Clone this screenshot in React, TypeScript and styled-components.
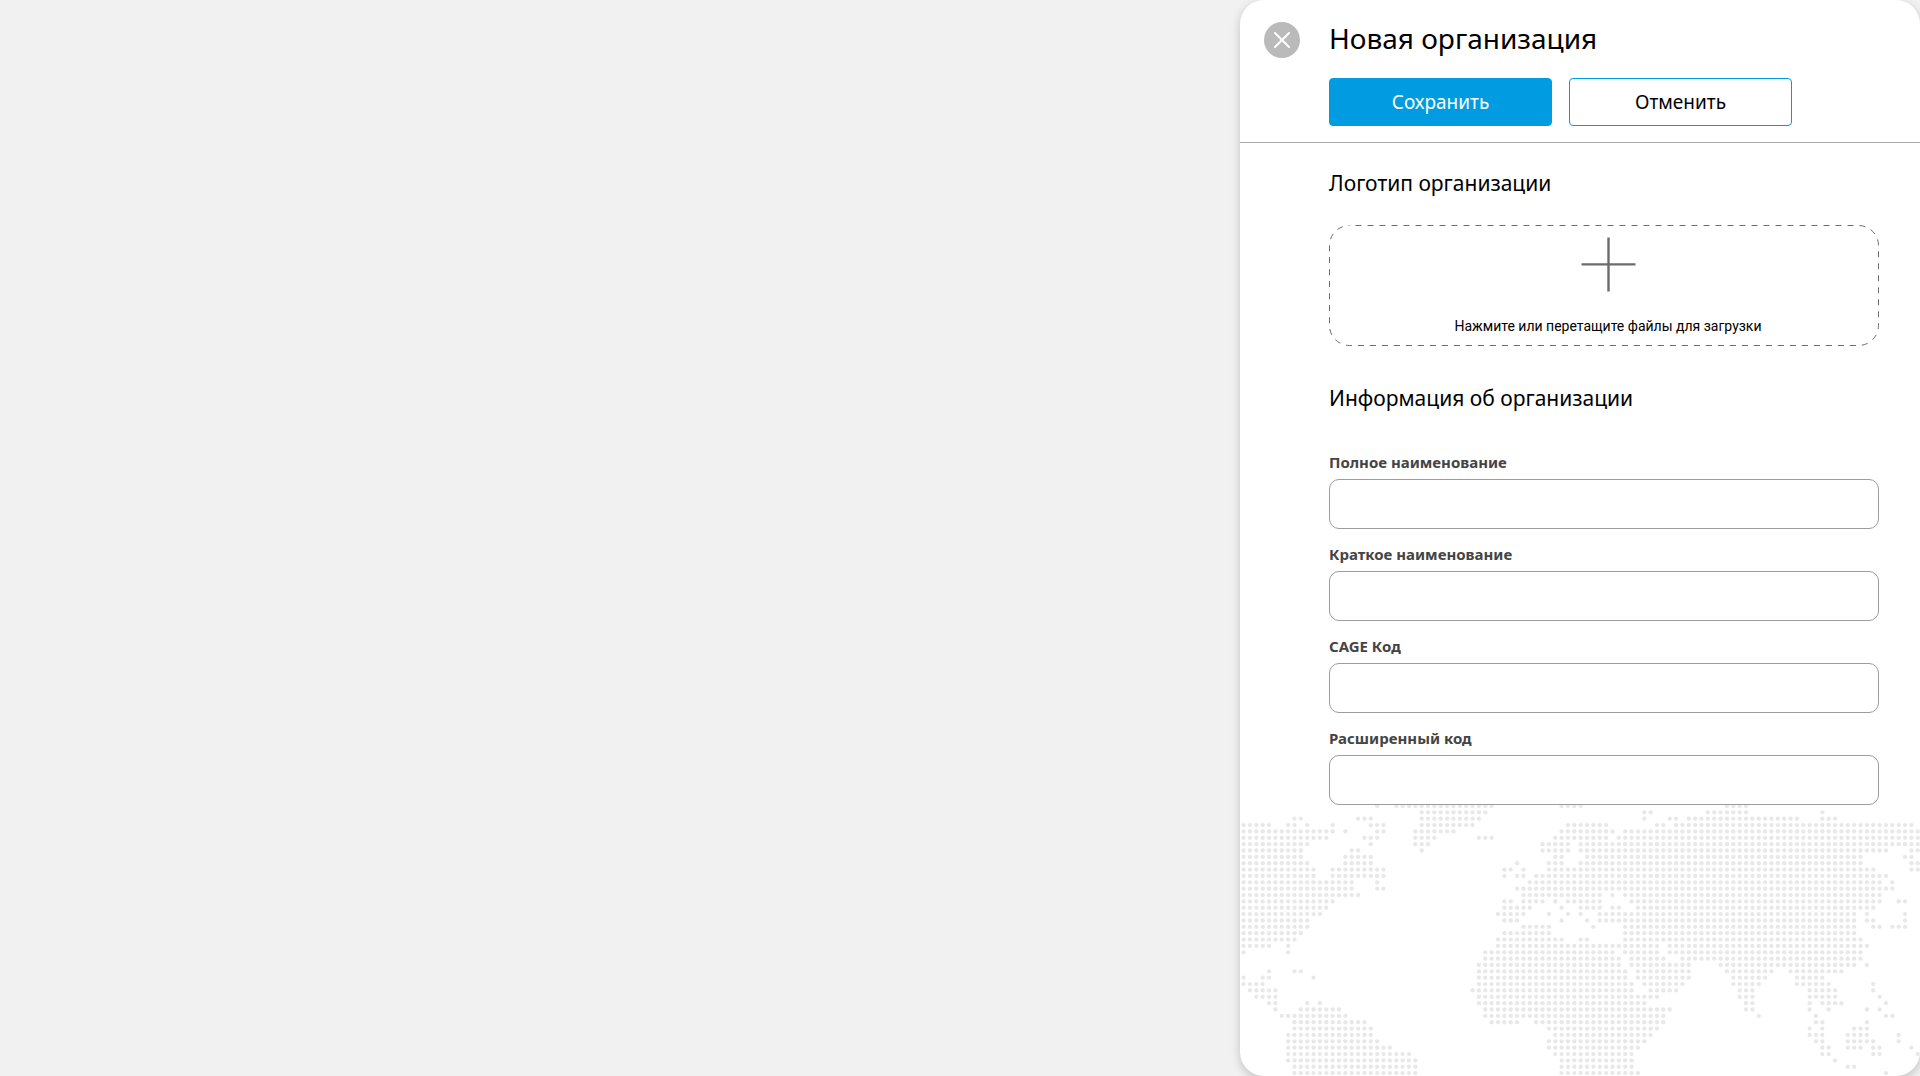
import React from 'react';
import styled, { createGlobalStyle } from 'styled-components';

const GlobalStyle = createGlobalStyle`
  *, *::before, *::after { box-sizing: border-box; }
  body {
    margin: 0;
    background: #f1f1f1;
    color: #000;
    font-family: 'Noto Sans', 'Open Sans', sans-serif;
  }
`;

const Page = styled.div`
  display: flex;
  justify-content: flex-end;
  min-height: 100vh;
`;

const Panel = styled.form`
  display: flex;
  flex-direction: column;
  width: 680px;
  max-width: 100%;
  overflow: hidden;
  background: #fff;
  border-radius: 24px;
  box-shadow: 0 3px 10px rgba(0, 0, 0, 0.2);
`;

const Header = styled.header`
  display: grid;
  grid-template-columns: 65px 1fr;
  row-gap: 20px;
  padding: 22px 24px 16px;
  border-bottom: 1px solid #aaa;
`;

const CloseButton = styled.button`
  display: flex;
  align-items: center;
  justify-content: center;
  width: 36px;
  height: 36px;
  padding: 0;
  border: 0;
  border-radius: 50%;
  background: #bababa;
  cursor: pointer;
`;

const Title = styled.h1`
  margin: 0;
  font-size: 28px;
  font-weight: 400;
  line-height: 32px;
`;

const Actions = styled.div`
  display: flex;
  grid-column: 2;
  gap: 17px;
`;

const ActionButton = styled.button<{ $primary?: boolean }>`
  width: 223px;
  height: 48px;
  padding: 0;
  border: 1px solid #009be0;
  border-radius: 4px;
  background: ${(p) => (p.$primary ? '#009be0' : '#fff')};
  color: ${(p) => (p.$primary ? '#fff' : '#000')};
  font-family: inherit;
  font-size: 19px;
  line-height: 28px;
  cursor: pointer;
`;

const Content = styled.main`
  display: flex;
  flex-direction: column;
  gap: 38px;
  padding: 26px 41px 0 89px;
`;

const Section = styled.section<{ $gap: number }>`
  display: flex;
  flex-direction: column;
  gap: ${(p) => p.$gap}px;
`;

const SectionTitle = styled.h2`
  margin: 0;
  font-size: 21px;
  font-weight: 400;
  line-height: 28px;
`;

const DropZone = styled.label`
  position: relative;
  display: flex;
  flex-direction: column;
  align-items: center;
  gap: 25px;
  height: 121px;
  padding: 12px 0 0 8px;
  font-family: Roboto, 'Noto Sans', sans-serif;
  font-size: 14px;
  line-height: 20px;
  cursor: pointer;
`;

const DashedOutline = styled.svg`
  position: absolute;
  top: 0;
  left: 0;
  width: 100%;
  height: 100%;

  rect {
    x: 0.5px;
    y: 0.5px;
    width: calc(100% - 1px);
    height: calc(100% - 1px);
  }
`;

const FileInput = styled.input`
  position: absolute;
  width: 1px;
  height: 1px;
  opacity: 0;
`;

const Fields = styled.div`
  display: flex;
  flex-direction: column;
  gap: 15px;
`;

const Field = styled.div`
  display: flex;
  flex-direction: column;
  gap: 7px;
`;

const FieldLabel = styled.label`
  color: #444;
  font-size: 15px;
  font-weight: 700;
  line-height: 20px;
`;

const TextInput = styled.input`
  width: 100%;
  height: 50px;
  padding: 0 16px;
  border: 1px solid #9c9c9c;
  border-radius: 10px;
  background: #fff;
  font-family: inherit;
  font-size: 19px;
`;

const MapFooter = styled.footer`
  display: flex;
  flex: 1;
  min-height: 271px;
`;

const MapSvg = styled.svg`
  width: 100%;
  height: 271px;
`;

/* Each string is one row of the dotted map: runs of filled columns. */
const MAP_ROWS = [
  '21 24-39 50-53 76-79',
  '28-38 63-64 73-79 91',
  '8-9 18-20 28-37 63 67-68 70-87 91-93',
  '0-4 7-8 10 14 20-22 28-36 51-57 65-66 68-105',
  '0-14 16 21-22 27-33 50-58 60-106',
  '0-13 19-21 27-30 37-39 49-57 59-106',
  '0-10 20 27-29 47-51 53-106',
  '0-9 17-18 28 47-51 53-101 105-106',
  '0-9 16-20 49-50 54-97 104-105',
  '0-10 16-20 43 48-50 53-97 105-106',
  '0-11 14-22 41-42 44 48-99 105-106',
  '0-11 14-22 41 43-44 46-101',
  '0-17 21 45-100 102',
  '0-17 21-22 43-102',
  '0-18 44-56 58 60-100',
  '0-14 41-42 44-47 49 51-56 61-100 103-104',
  '0-13 41-45 50 53-56 58-59 62-99',
  '0-12 40-44 48 51 53 56-96 98 104',
  '0-10 41-43 50 54 56-96 98-99 104',
  '0-10 44-48 55 60-96 99-100 102-104',
  '0-9 41-48 60-96',
  '0-8 40-50 53-54 60-97',
  '0-4 7 40-65 67-98',
  '0 7 38-58 60-65 67-97',
  '38-59 61-66 69-97',
  '37-59 61-70 75-96 98',
  '4 8-9 37-60 62-70 76-83 86-94',
  '0 3-4 11 37-60 62-70 77-82 87-91',
  '0-3 37-61 63-69 77-81 87-92 99',
  '1-5 36-61 64-68 78-80 89-93 99',
  '2-5 37-65 78-80 89-93 100',
  '4-5 10 12 37-63 79-80 89 91-94 101',
  '5 9-15 38-67 79-80 89 92 98 100',
  '6-16 38-66 81 90 101-102',
  '8-19 39-43 46-66 90-91 98',
  '8-20 48-65 89 91 96-98',
  '7-20 49-64 89-91 95-98 103',
  '7-21 48-63 90-91 95-99 103',
  '7-23 48-62 91-92 95-97 99-100 105',
  '7-26 49-61 91-92 99-100 106',
  '7-27 50-61 93',
  '8-27 50-61 95-96',
  '8-27 50-62 101',
];

const PITCH = 6.36;

const DOTS = MAP_ROWS.flatMap((row, r) =>
  row.split(' ').flatMap((run) => {
    const [from, to = from] = run.split('-').map(Number);
    return Array.from({ length: to - from + 1 }, (_, i) => ({
      x: 3.6 + (from + i) * PITCH,
      y: 1 + r * PITCH,
    }));
  }),
);

const DottedMap = () => (
  <MapSvg viewBox="0 0 680 271" preserveAspectRatio="xMinYMin slice" aria-hidden="true">
    {DOTS.map((d) => (
      <circle key={`${d.x}-${d.y}`} cx={d.x} cy={d.y} r="2.15" fill="#e8e8e8" />
    ))}
  </MapSvg>
);

const FIELDS = [
  { id: 'fullName', label: 'Полное наименование' },
  { id: 'shortName', label: 'Краткое наименование' },
  { id: 'cageCode', label: 'CAGE Код' },
  { id: 'extendedCode', label: 'Расширенный код' },
];

export default function App() {
  return (
    <>
      <GlobalStyle />
      <Page>
        <Panel onSubmit={(e) => e.preventDefault()}>
          <Header>
            <CloseButton type="button" aria-label="Закрыть">
              <svg width="16" height="16" viewBox="0 0 16 16" aria-hidden="true">
                <path d="M1 1L15 15M15 1L1 15" stroke="#fff" strokeWidth="2" strokeLinecap="round" />
              </svg>
            </CloseButton>
            <Title>Новая организация</Title>
            <Actions>
              <ActionButton type="submit" $primary>Сохранить</ActionButton>
              <ActionButton type="button">Отменить</ActionButton>
            </Actions>
          </Header>
          <Content>
            <Section $gap={28}>
              <SectionTitle>Логотип организации</SectionTitle>
              <DropZone>
                <DashedOutline aria-hidden="true">
                  <rect rx="20" fill="none" stroke="#6c6c6c" strokeDasharray="6 6" strokeDashoffset="6" />
                </DashedOutline>
                <FileInput type="file" />
                <svg width="54" height="54" viewBox="0 0 54 54" overflow="visible" aria-hidden="true">
                  <path d="M27.5 0.4V54.4M0.5 27.4H54.5" stroke="#6c6c6c" strokeWidth="2.4" />
                </svg>
                <span>Нажмите или перетащите файлы для загрузки</span>
              </DropZone>
            </Section>
            <Section $gap={40}>
              <SectionTitle>Информация об организации</SectionTitle>
              <Fields>
                {FIELDS.map((f) => (
                  <Field key={f.id}>
                    <FieldLabel htmlFor={f.id}>{f.label}</FieldLabel>
                    <TextInput id={f.id} name={f.id} type="text" />
                  </Field>
                ))}
              </Fields>
            </Section>
          </Content>
          <MapFooter>
            <DottedMap />
          </MapFooter>
        </Panel>
      </Page>
    </>
  );
}
